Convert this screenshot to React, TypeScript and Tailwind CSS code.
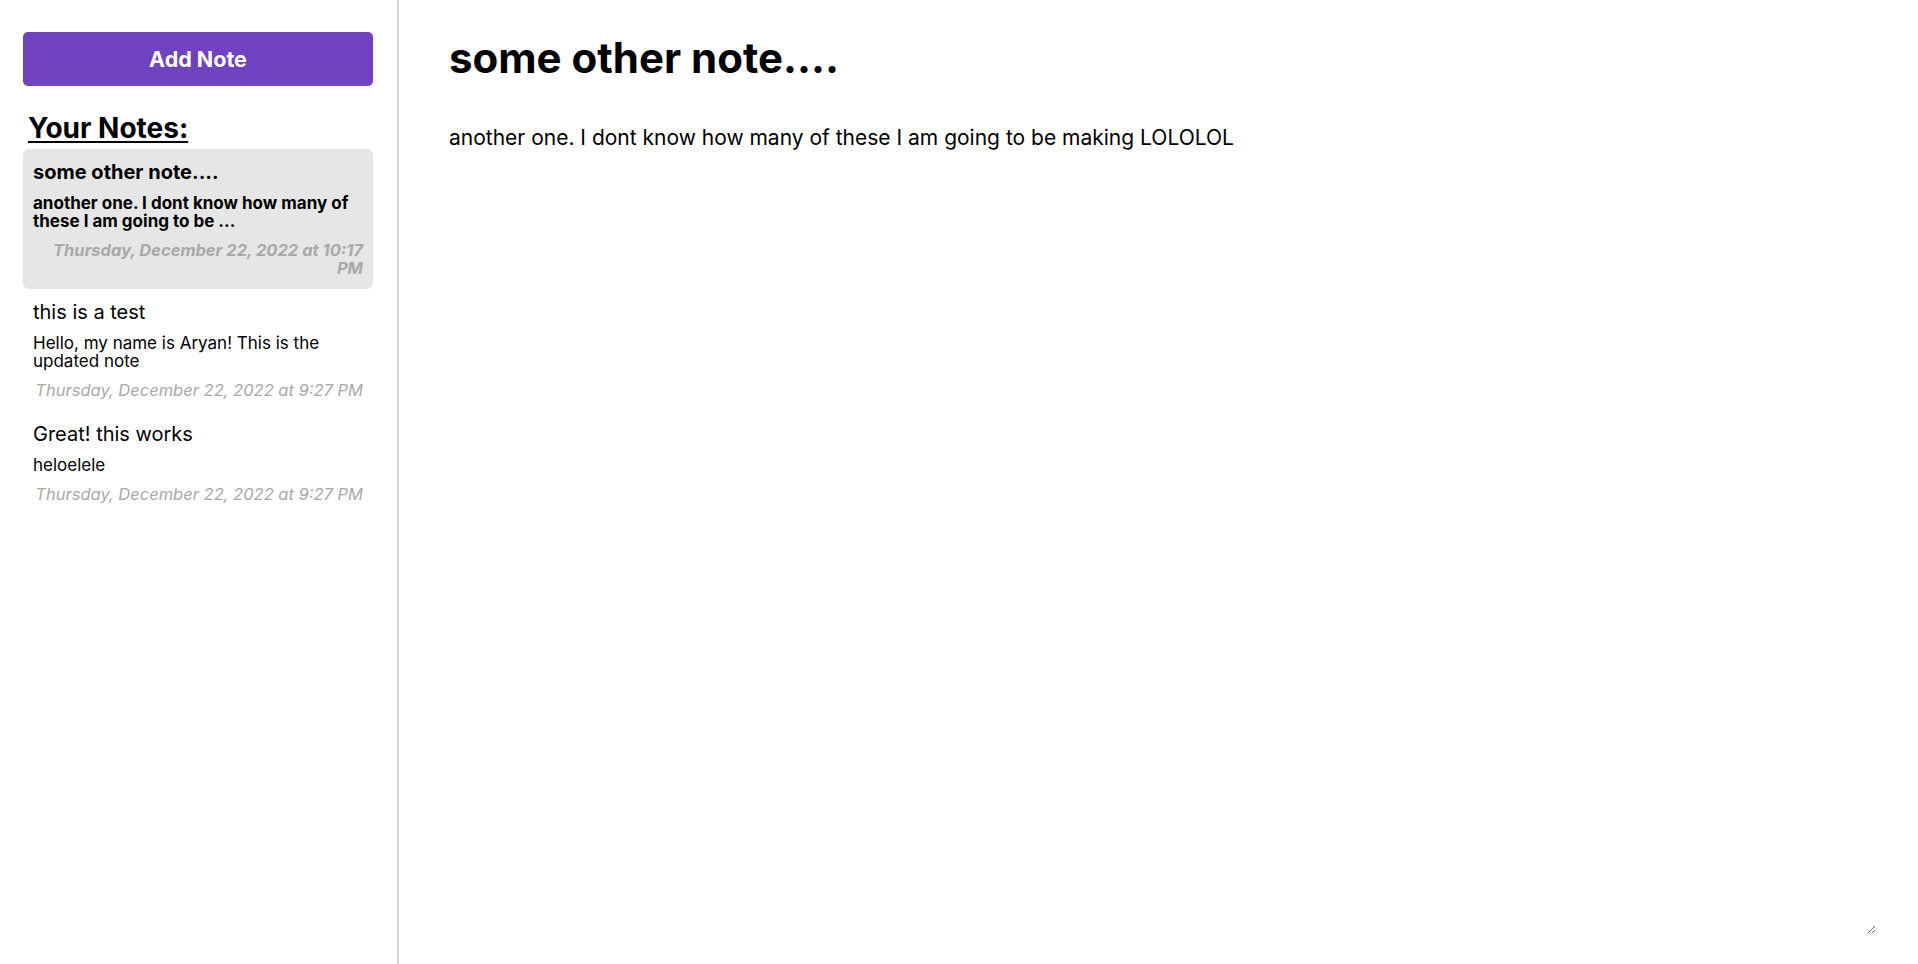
import React, { useState } from "react";

type Note = {
  id: number;
  title: string;
  body: string;
  date: string;
};

const notes: Note[] = [
  {
    id: 3,
    title: "some other note....",
    body: "another one. I dont know how many of these I am going to be making LOLOLOL",
    date: "Thursday, December 22, 2022 at 10:17 PM",
  },
  {
    id: 2,
    title: "this is a test",
    body: "Hello, my name is Aryan! This is the updated note",
    date: "Thursday, December 22, 2022 at 9:27 PM",
  },
  {
    id: 1,
    title: "Great! this works",
    body: "heloelele",
    date: "Thursday, December 22, 2022 at 9:27 PM",
  },
];

function preview(text: string) {
  return text.length > 60 ? text.slice(0, 60) + "..." : text;
}

function NoteItem({ note, active, onClick }: { note: Note; active: boolean; onClick: () => void }) {
  return (
    <div
      onClick={onClick}
      className={`cursor-pointer rounded-[6px] px-2.5 pt-[11px] pb-[12px] ${active ? "bg-[#e6e6e6] font-bold" : ""}`}
    >
      <h3 className="text-[20px] leading-[24px]">{note.title}</h3>
      <p className="mt-[10px] text-[17px] leading-[18px]">{preview(note.body)}</p>
      <p className="mt-[11px] text-right text-[16.5px] leading-[18px] italic text-[#a9a9a9]">{note.date}</p>
    </div>
  );
}

export default function App() {
  const [activeId, setActiveId] = useState(3);
  const active = notes.find((n) => n.id === activeId)!;

  return (
    <div className="flex h-screen w-full bg-white text-black font-['Inter',sans-serif]">
      <aside className="flex w-[399px] shrink-0 flex-col border-r-2 border-[#d4d4d4] pl-[23px] pr-[24px]">
        <button className="mt-[32px] h-[54px] w-full rounded-[5px] bg-[#6f42c1] text-[21.5px] font-bold text-white">
          Add Note
        </button>
        <h2 className="mt-[25px] pl-[5px] text-[28px] leading-[34px] font-bold underline decoration-2 underline-offset-[3px]">
          Your Notes:
        </h2>
        <div className="mt-[4px] flex flex-col">
          {notes.map((n) => (
            <NoteItem key={n.id} note={n} active={n.id === activeId} onClick={() => setActiveId(n.id)} />
          ))}
        </div>
      </aside>
      <main className="flex min-w-0 flex-1 flex-col pt-[33px] pl-[50px] pr-[42px] pb-[30px]">
        <input
          value={active.title}
          readOnly
          className="h-[50px] w-full border-none p-0 text-[42px] leading-[50px] font-bold outline-none"
        />
        <textarea
          value={active.body}
          readOnly
          className="mt-[42px] w-full flex-1 border-none p-0 text-[21px] leading-[26px] outline-none"
        />
      </main>
    </div>
  );
}
